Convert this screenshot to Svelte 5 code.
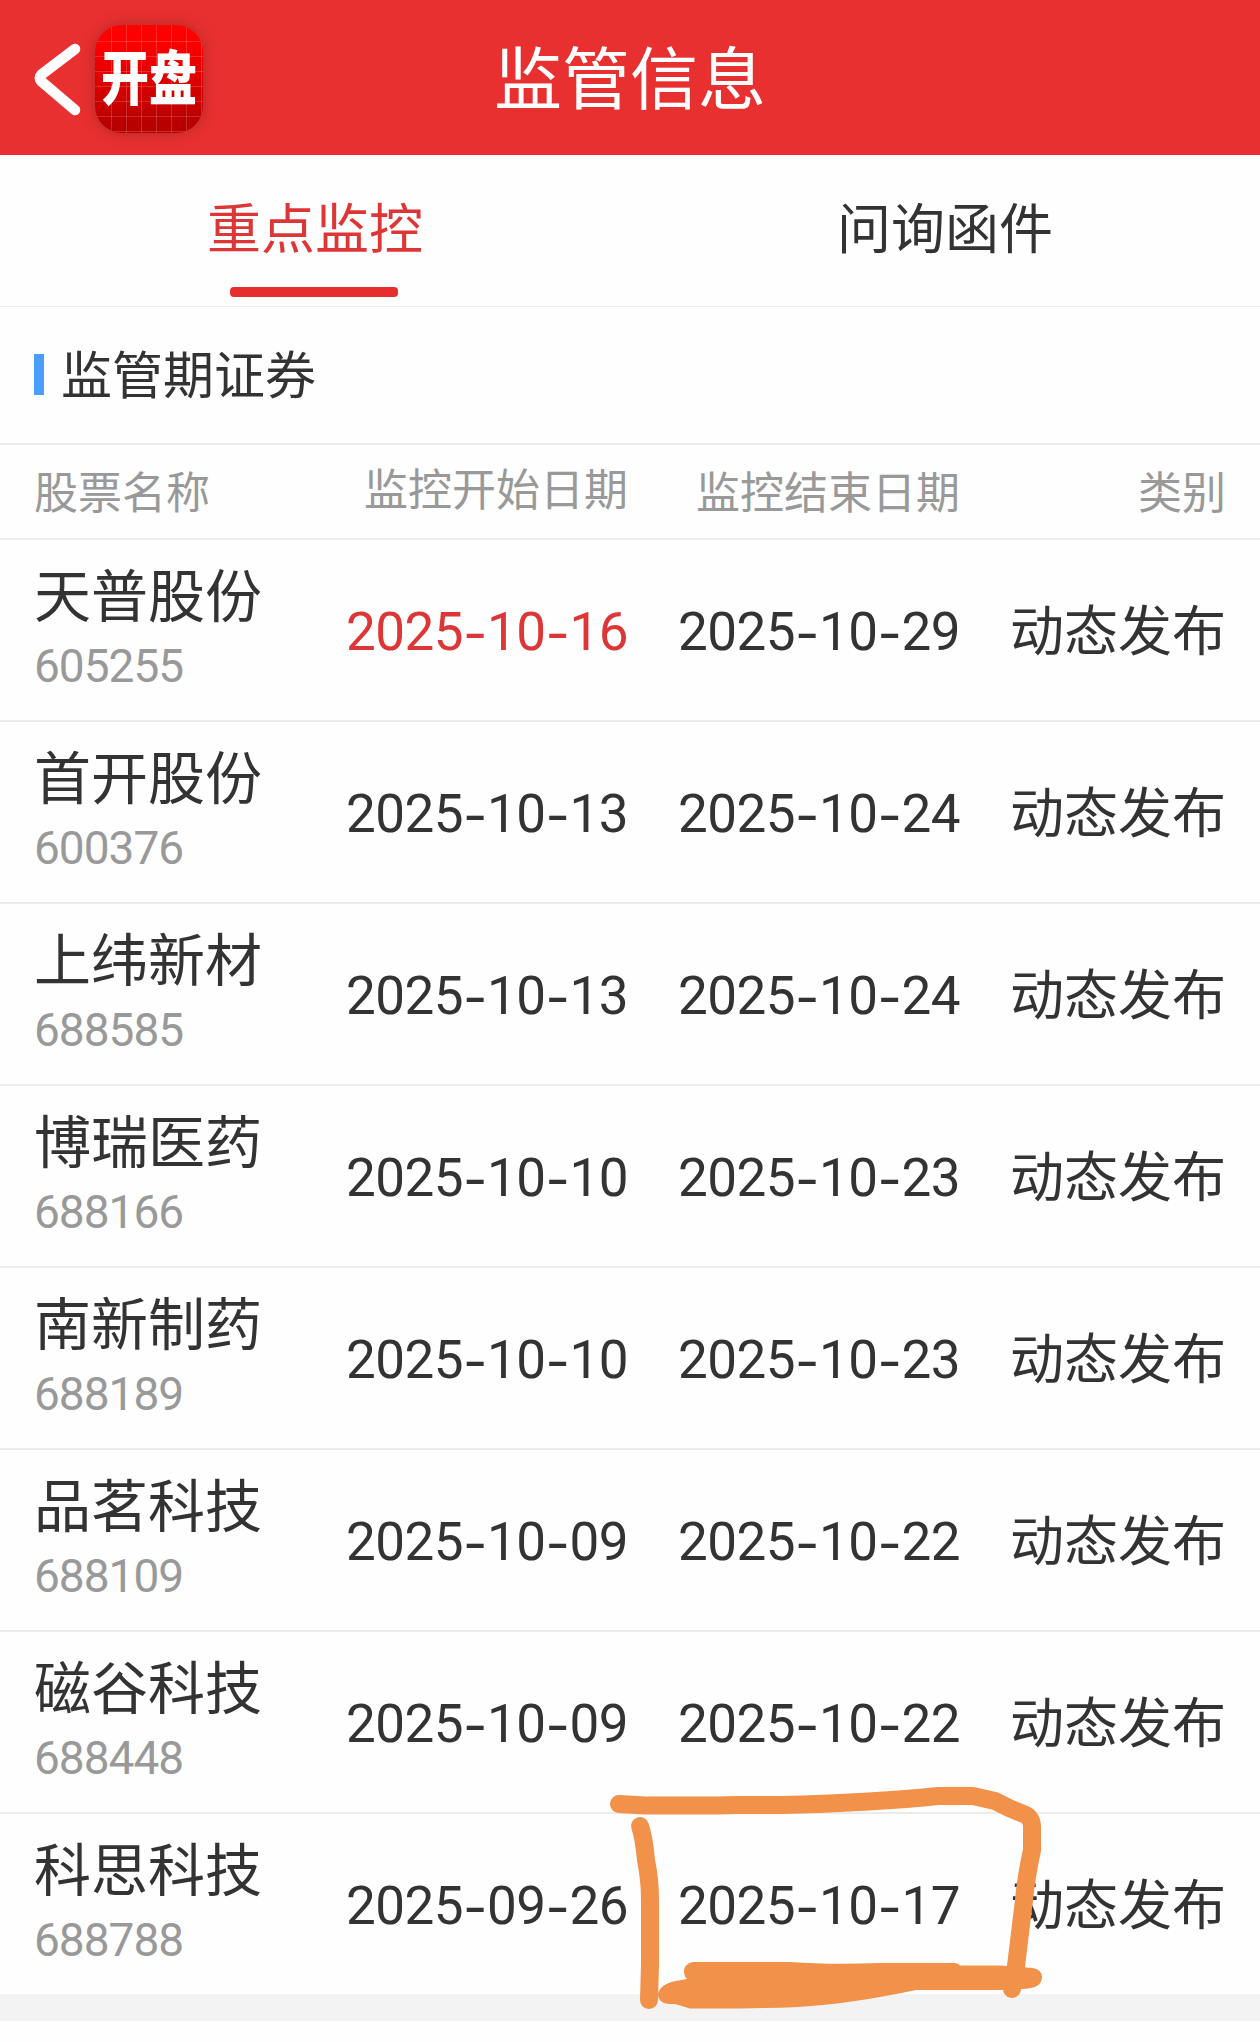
<script>
  const tabs = ["重点监控", "问询函件"];
  let active = $state(0);

  const stocks = [
    { name: "天普股份", code: "605255", start: "2025-10-16", end: "2025-10-29", fresh: true },
    { name: "首开股份", code: "600376", start: "2025-10-13", end: "2025-10-24" },
    { name: "上纬新材", code: "688585", start: "2025-10-13", end: "2025-10-24" },
    { name: "博瑞医药", code: "688166", start: "2025-10-10", end: "2025-10-23" },
    { name: "南新制药", code: "688189", start: "2025-10-10", end: "2025-10-23" },
    { name: "品茗科技", code: "688109", start: "2025-10-09", end: "2025-10-22" },
    { name: "磁谷科技", code: "688448", start: "2025-10-09", end: "2025-10-22" },
    { name: "科思科技", code: "688788", start: "2025-09-26", end: "2025-10-17" }
  ];
</script>

{#snippet date(value)}
  {#each value.split("-") as part, i}{#if i > 0}<span class="dash">-</span>{/if}{part}{/each}
{/snippet}

<div class="page">
  <header>
    <div class="left">
      <svg class="back" width="48" height="74" viewBox="0 0 48 74">
        <path d="M42 7 L8.5 32.5 Q5 36 8.5 39.500 L42 68" />
      </svg>
      <div class="logo"><span>开盘</span></div>
    </div>
    <h1>监管信息</h1>
  </header>

  <nav>
    {#each tabs as tab, i}
      <button class:active={active === i} onclick={() => (active = i)}>{tab}</button>
    {/each}
  </nav>

  <h2>监管期证券</h2>

  <div class="row head">
    <span>股票名称</span>
    <span class="raised">监控开始日期</span>
    <span>监控结束日期</span>
    <span>类别</span>
  </div>

  <div class="list">
    {#each stocks as stock}
      <div class="row stock">
        <div class="name">
          <strong>{stock.name}</strong>
          <small>{stock.code}</small>
        </div>
        <span class="date" class:fresh={stock.fresh}>{@render date(stock.start)}</span>
        <span class="date">{@render date(stock.end)}</span>
        <span class="kind">动态发布</span>
      </div>
    {/each}

    <!-- marker strokes over the last row -->
    <svg class="marker" width="440" height="230" viewBox="600 1780 440 230">
      <path d="M619 1804 L645 1805.500 H718 L735 1805 H780 Q870 1803 938 1796 H973 L995 1801 L1009 1808 L1026 1815 Q1032 1819 1032 1826 V1850 Q1026 1878 1024 1900 L1016 1966 L1012 1989" />
      <path d="M640 1826 Q644 1838 646 1860 Q650 1880 650 1900 V1965 L649 2000" />
      <path
        class="fill"
        d="M693 1962 H790 Q830 1965 880 1963 H955 Q958 1963 960 1965.500 H1000 L1033 1968 Q1042 1970 1042 1977 Q1042 1984 1035 1987 Q1028 1989 1022 1989 L1000 1990 H916 Q850 2004 798 2007 Q750 2009 690 2008.500 L675 2004 Q658 2005 658 1994 Q660 1984 676 1981 L687 1979 Q684 1976 684 1971 Q684 1964 693 1962 Z"
      />
    </svg>
  </div>
  <footer></footer>
</div>

<style>
  :global(body) {
    margin: 0;
    background: #fff;
  }

  .page {
    width: 1260px;
    height: 2042px;
    overflow: hidden;
    background: #fefefe;
    color: #333;
    font-family: Roboto, "Noto Sans CJK SC", sans-serif;
  }

  header {
    display: grid;
    grid-template-columns: 1fr auto 1fr;
    align-items: center;
    height: 155px;
    background: #e93030;
    color: #fff;
  }

  .left {
    display: flex;
    align-items: center;
    padding: 2px 0 0 33px;
  }

  .back {
    margin-right: 14px;
    fill: none;
    stroke: #fff;
    stroke-width: 10.5;
    stroke-linecap: round;
    stroke-linejoin: round;
  }

  .logo {
    display: flex;
    align-items: center;
    justify-content: center;
    width: 108px;
    height: 108px;
    border-radius: 27px;
    background:
      repeating-linear-gradient(90deg, transparent 0 14px, rgba(255, 255, 255, 0.17) 14px 15px) 2px 0,
      repeating-linear-gradient(transparent 0 14px, rgba(255, 255, 255, 0.17) 14px 15px) 0 2px,
      linear-gradient(#f00 15%, #b80000 90%);
    box-shadow: 0 0 14px rgba(90, 30, 30, 0.4);
  }

  .logo span {
    padding-top: 2px;
    font-size: 48px;
    font-weight: 900;
    line-height: 1;
    transform: scaleY(1.22);
  }

  h1 {
    margin: 0;
    padding-top: 7px;
    font-size: 68px;
    font-weight: 400;
    line-height: 1;
  }

  nav {
    display: flex;
    height: 151px;
    border-bottom: 1px solid #ebebeb;
  }

  nav button {
    position: relative;
    flex: 1;
    padding: 1px 0 0;
    border: 0;
    background: none;
    color: #333;
    font: inherit;
    font-size: 54px;
    line-height: 1;
  }

  nav button.active {
    color: #dc3636;
  }

  nav button.active::after {
    content: "";
    position: absolute;
    left: 50%;
    bottom: 9px;
    width: 168px;
    height: 10px;
    margin-left: -85px;
    border-radius: 4px;
    background: #e62e2e;
  }

  h2 {
    display: flex;
    align-items: center;
    height: 133px;
    margin: 0;
    padding: 3px 0 0 34px;
    border-bottom: 2px solid #ebebeb;
    font-size: 51px;
    font-weight: 400;
    line-height: 1;
  }

  h2::before {
    content: "";
    width: 10px;
    height: 41px;
    margin: 0 17px 4px 0;
    background: #4a9eff;
  }

  .row {
    display: grid;
    grid-template-columns: 262px 332px 332px 266px;
    align-items: center;
    box-sizing: border-box;
    padding: 0 34px;
    border-bottom: 2px solid #ebebeb;
    text-align: right;
    white-space: nowrap;
  }

  .head {
    height: 95px;
    padding-top: 4px;
    color: #999;
    font-size: 44px;
    line-height: 1;
  }

  .head span:first-child,
  .name {
    text-align: left;
  }

  .head .raised {
    padding-bottom: 6px;
  }

  .list {
    position: relative;
  }

  .stock {
    height: 182px;
    font-size: 54px;
    line-height: 1;
  }

  .stock:nth-child(8) {
    height: 180px;
    border-bottom: 0;
  }

  .name strong,
  .name small {
    display: block;
    font-weight: 400;
  }

  .name strong {
    font-size: 57px;
  }

  .name small {
    margin-top: 17px;
    color: #999;
    font-size: 46px;
    letter-spacing: -1px;
  }

  .name {
    padding-bottom: 3px;
  }

  .date {
    padding-top: 5px;
    font-size: 53px;
    letter-spacing: -0.5px;
  }

  .dash {
    font-family: Inter, sans-serif;
    line-height: 0;
    vertical-align: -2px;
  }

  .kind {
    padding-top: 5px;
  }

  .fresh {
    color: #dc3636;
  }

  .marker {
    position: absolute;
    left: 600px;
    bottom: -16px;
    overflow: visible;
    fill: none;
    stroke: #f29149;
    stroke-width: 18;
    stroke-linecap: round;
    stroke-linejoin: round;
  }

  .marker .fill {
    fill: #f29149;
    stroke: none;
  }

  footer {
    height: 27px;
    background: #f3f3f3;
  }
</style>
